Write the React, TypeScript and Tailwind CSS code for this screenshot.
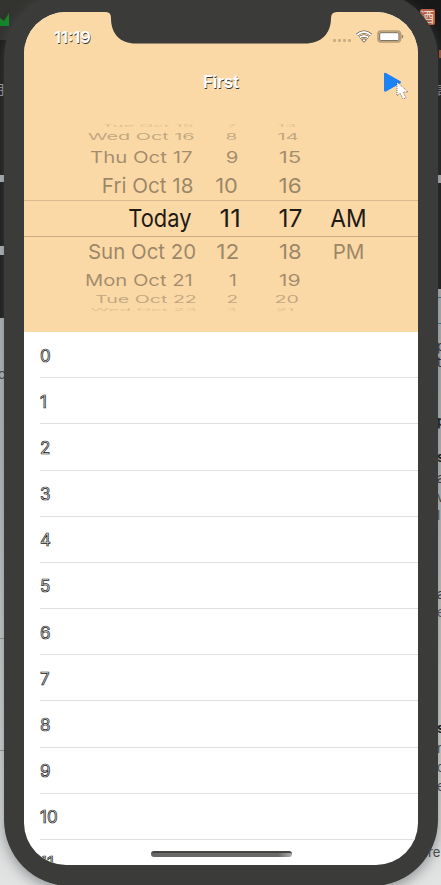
import React from 'react';

type Cell = { text: string; right: number; sx: number };
type Row = { style: string; size: number; sy: number; opacity: number; cells: Cell[] };

// Values on the wheel narrow and flatten as they turn away from the selected row.
const rows: Row[] = [
  { style: 'h-[6px]', size: 20, sy: 0.14, opacity: 0.12, cells: [
    { text: 'Tue Oct 15', right: 194, sx: 0.92 }, { text: '7', right: 236, sx: 0.75 }, { text: '13', right: 296, sx: 0.95 } ] },
  { style: 'h-[13px] pt-[2px]', size: 20, sy: 0.47, opacity: 0.23, cells: [
    { text: 'Wed Oct 16', right: 195, sx: 0.99 }, { text: '8', right: 237, sx: 0.95 }, { text: '14', right: 299, sx: 1.04 } ] },
  { style: 'h-[29px]', size: 20, sy: 0.82, opacity: 0.35, cells: [
    { text: 'Thu Oct 17', right: 193, sx: 1.02 }, { text: '9', right: 238, sx: 1.02 }, { text: '15', right: 301, sx: 1.11 } ] },
  { style: 'h-[29px]', size: 21, sy: 0.97, opacity: 0.38, cells: [
    { text: 'Fri Oct 18', right: 193, sx: 0.98 }, { text: '10', right: 238, sx: 1.04 }, { text: '16', right: 302, sx: 1.07 } ] },
  { style: 'h-[37px] border-y border-t-[#dabb8f] border-b-[#cbac80] pt-[2px]', size: 23, sy: 1.05, opacity: 0.88, cells: [
    { text: 'Today', right: 191, sx: 0.95 }, { text: '11', right: 241, sx: 1.13 }, { text: '17', right: 302, sx: 1.07 }, { text: 'AM', right: 367, sx: 0.99 } ] },
  { style: 'h-[29px]', size: 21, sy: 0.98, opacity: 0.38, cells: [
    { text: 'Sun Oct 20', right: 196, sx: 0.973 }, { text: '12', right: 239, sx: 1.08 }, { text: '18', right: 302, sx: 1.05 }, { text: 'PM', right: 364, sx: 0.98 } ] },
  { style: 'h-[27px]', size: 20, sy: 0.8, opacity: 0.35, cells: [
    { text: 'Mon Oct 21', right: 193, sx: 1.01 }, { text: '1', right: 237, sx: 1 }, { text: '19', right: 301, sx: 1.06 } ] },
  { style: 'h-[13px] pt-px', size: 20, sy: 0.48, opacity: 0.23, cells: [
    { text: 'Tue Oct 22', right: 197, sx: 0.98 }, { text: '2', right: 238, sx: 0.95 }, { text: '20', right: 299, sx: 0.98 } ] },
  { style: 'h-[7px]', size: 20, sy: 0.14, opacity: 0.12, cells: [
    { text: 'Wed Oct 23', right: 197, sx: 0.95 }, { text: '3', right: 236, sx: 0.8 }, { text: '21', right: 294, sx: 0.92 } ] },
];

function Wheel() {
  return (
    <div className="flex flex-col text-black">
      {rows.map((r, i) => (
        <div key={i} className={`flex shrink-0 items-center leading-none ${r.style}`}>
          {r.cells.map((c, j) => (
            <div key={j} className="flex shrink-0 justify-end whitespace-nowrap" style={{ width: c.right - (j === 0 ? 24 : r.cells[j - 1].right) }}>
              <span className="origin-right" style={{ fontSize: r.size, opacity: r.opacity, transform: `scale(${c.sx}, ${r.sy})` }}>{c.text}</span>
            </div>
          ))}
        </div>
      ))}
    </div>
  );
}

function StatusBar() {
  return (
    <div className="flex h-[49px] items-center justify-between pr-[13px] pl-[30px]">
      <span className="text-[16.5px] leading-5 font-semibold text-white [text-shadow:0.5px_0.5px_0.4px_#333]">11:19</span>
      <div className="flex items-center">
        <div className="mt-2 mr-1 flex gap-[2px]">
          {[0, 1, 2, 3].map(n => <i key={n} className="h-[3px] w-[3px] rounded-[1px] bg-[#c9ad83]" />)}
        </div>
        <svg className="mr-[3px]" width="19" height="15" viewBox="0 0 19 15">
          <g fill="none">
            <path d="M2 5.9Q9 .3 16 5.9M4.6 8.6Q9 5.3 13.4 8.6" stroke="#373126" strokeWidth="2.9" />
            <path d="M2 5.9Q9 .3 16 5.9M4.6 8.6Q9 5.3 13.4 8.6" stroke="white" strokeWidth="1.9" />
          </g>
          <path d="M6.6 10.7Q9 8.9 11.4 10.7L9 13.3Z" fill="white" stroke="#373126" strokeWidth=".7" />
        </svg>
        <svg width="28" height="14" viewBox="0 0 28 14">
          <rect x="1" y="1" width="22.5" height="11" rx="3" fill="#dfc394" stroke="#b79d75" strokeWidth="1.6" />
          <rect x="2.7" y="2.7" width="19.2" height="7.8" rx="1.3" fill="white" stroke="#4b4436" strokeWidth=".7" />
          <path d="M24.7 4.2Q28 6.5 24.7 8.8Z" fill="#8e7c60" />
        </svg>
      </div>
    </div>
  );
}

function TitleBar() {
  return (
    <div className="grid h-[42px] grid-cols-[1fr_auto_1fr] items-center">
      <h1 className="col-start-2 text-[17px] leading-[18px] font-semibold tracking-[-0.1px] text-white [text-shadow:0.5px_0.5px_0.4px_#333]">First</h1>
      <svg className="mr-[15px] justify-self-end" width="20" height="23" viewBox="0 0 20 23">
        <path d="M1 3Q1 1 3 2L17 10Q19 11.5 17 12.6L3 20.5Q1 21.5 1 19Z" fill="#1c82f5" />
      </svg>
    </div>
  );
}

// Slices of the page behind the phone; each entry is one line in the right margin.
const sideText = [
  { t: 'p', s: 'mt-[14px] text-[#222]' }, { t: 't', s: 'text-[#111]' },
  { t: 'p', s: 'mt-[43px] font-bold text-[#111]' }, { t: 's', s: 'mt-[20px] font-bold text-[#111]' },
  { t: 'a', s: 'mt-[5px] text-[#333]' }, { t: 'v', s: 'mt-[3px] text-[#444]' },
  { t: 'l', s: 'mt-[2px] text-[#444]' }, { t: 'al', s: 'mt-[63px] text-[#333]' },
  { t: 'e', s: 'mt-[2px] text-[#555]' }, { t: 's', s: 'mt-[100px] font-bold text-[#111]' },
  { t: 'n', s: 'mt-[4px] text-[#444]' }, { t: 'c', s: 'mt-[3px] text-[#444]' },
  { t: 'e', s: 'mt-[3px] text-[#444]' },
];

function Desktop() {
  return (
    <div className="flex justify-between overflow-hidden bg-[#dfe1e1] text-[13px] leading-4">
      <div className="flex h-[885px] w-[100px] flex-col bg-gradient-to-b from-[#aeb6b8] via-[#b7bec0] to-[#e2e3e3]">
        <div className="flex h-[175px] shrink-0 flex-col bg-[#1b1b1a]">
          <svg className="shrink-0 bg-[#333330]" width="40" height="40"><path d="M0 18l4 3 5-8v13H0z" fill="#15862a" /></svg>
          <span className="mt-[41px] -ml-[9px] text-[#aaa]">明</span>
        </div>
        <div className="mt-[7px] h-[64px] w-5 shrink-0 bg-[#181918]" />
        <div className="mt-[9px] h-[63px] w-5 shrink-0 bg-[#181918]" />
        <span className="mt-[48px] -ml-[2px] text-[#444]">c</span>
        <div className="mt-[256px] h-px w-1 shrink-0 bg-[#939a9b]" />
        <div className="mt-[111px] h-px w-1 shrink-0 bg-[#939a9b]" />
      </div>
      <div className="flex h-[885px] w-[100px] flex-col bg-gradient-to-b from-[#a9afb1] via-[#b2b8b9] to-[#e2e3e3]">
        <div className="flex h-[175px] shrink-0 flex-col bg-[#171817] pt-[9px]">
          <div className="ml-[79px] h-4 w-[15px] overflow-hidden rounded-[2px] bg-[#bf604b] text-[14px] text-[#eee0cd]">酒</div>
          <div className="mt-[25px] ml-[98px] h-2 w-[2px] bg-[#a9512e]" />
          <span className="mt-[23px] ml-[95px] text-[#999]">言</span>
        </div>
        <div className="mt-[8px] h-[106px] shrink-0 bg-[#141514]" />
        <div className="mt-[8px] h-px shrink-0 bg-[#35737b]" />
        <div className="mt-[25px] h-px shrink-0 bg-[#35737b]" />
        {sideText.map((l, i) => <span key={i} className={`ml-[96px] shrink-0 ${l.s}`}>{l.t}</span>)}
      </div>
    </div>
  );
}

function Phone() {
  return (
    <div className="relative -mt-2 ml-1 h-[894px] w-[434px] rounded-[66px] bg-[#3b3b39] p-5 shadow-[0_4px_13px_#555b5d99]">
      <section className="relative flex h-[853px] flex-col overflow-hidden rounded-[42px] bg-white">
        <header className="flex h-[320px] shrink-0 flex-col bg-[#fbd9a7]">
          <StatusBar />
          <TitleBar />
          <div className="pt-5"><Wheel /></div>
        </header>
        <ul>
          {Array.from({ length: 12 }, (_, n) => (
            <li key={n} className="flex h-[46.18px] pl-4">
              <div className="flex flex-1 items-center border-b border-[#e0e0e0] pt-[3px] text-[17px] leading-none text-[#e4e4e4] [-webkit-text-stroke:0.7px_#181818]">{n}</div>
            </li>
          ))}
        </ul>
        <div className="absolute bottom-2 left-[127px] h-[6px] w-[141px] rounded-full border-t-2 border-[#444542] bg-gradient-to-r from-[#686966] from-90% to-[#adafae]" />
      </section>
      <svg className="absolute top-[18px] left-[102px]" width="231" height="34" viewBox="0 0 231 34">
        <path d="M0 0V2Q5 2 5 8C5 24 14 33.5 30 33.5H199C215 33.5 225 24 225 8Q225 2 231 2V0Z" fill="#3b3b39" />
      </svg>
      <svg className="absolute top-[89px] left-[391px]" width="15" height="20" viewBox="0 0 15 20">
        <path d="M2 1V15L5 12L8 18L11 17L8 11H13Z" fill="white" stroke="#444" strokeWidth=".7" strokeDasharray="1 1" />
      </svg>
      <span className="absolute top-[852px] left-[424px] text-[13px] leading-4 text-[#464849]">re</span>
    </div>
  );
}

export default function App() {
  return (
    <main className="grid h-[885px] w-[441px] overflow-hidden font-['Inter','Noto_Sans_CJK_SC',sans-serif] [&>*]:[grid-area:1/1]">
      <Desktop />
      <Phone />
    </main>
  );
}
